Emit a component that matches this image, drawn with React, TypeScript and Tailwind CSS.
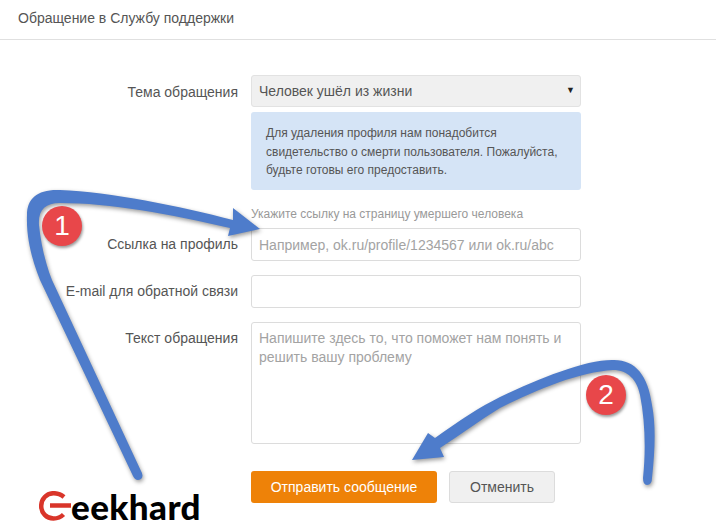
/**
 * Support request form with hand-drawn arrows laid over it
 */

const labelClass = 'w-[239px] shrink-0 pr-[1px] text-right text-[14px] text-[#555]';
const inputClass =
    'block h-[33px] w-[330px] rounded-[3px] border border-[#dcdcdc] bg-white px-[7px] text-[14px] text-[#555] placeholder:text-[#a3a3a3]';

function Arrows() {
    return (
        <svg
            className="pointer-events-none absolute top-0 left-0 drop-shadow-[1px_2px_2px_rgba(0,0,0,0.4)]"
            width="716"
            height="521"
            viewBox="0 0 716 521"
            fill="#4e7ccb"
        >
            {/* Arrow 1 */}
            <path d="M133 476 Q136 482 141 479 Q144 476 141 471 L52 280 C46 265 41 245 39 225 C38 210 45 203 60 203 C110 203 170 214 230 228 L228 236 L260 229 L233 208 L233 220 C180 206 110 192 60 190 C38 189 27 198 27 215 C26 240 33 262 40 280 Z" />
            {/* Arrow 2 */}
            <path d="M643 478 Q643 485 647 485 Q652 485 652 478 C655 450 656 425 652 405 C648 375 635 359 612 360 C585 360 540 378 500 397 C480 407 460 420 435 438 L428 433 L412 460 L444 457 L440 448 C460 435 480 420 500 408 C540 388 580 372 613 370 C628 370 637 380 640 395 C645 420 646 450 643 478 Z" />
        </svg>
    );
}

function Badge({ value, className }: { value: string; className: string }) {
    return (
        <div
            className={`absolute flex h-10 w-10 items-center justify-center rounded-full bg-[#e8474a] text-[28px] leading-none text-white shadow-[1px_2px_3px_rgba(0,0,0,0.4)] ${className}`}
        >
            {value}
        </div>
    );
}

function Logo() {
    return (
        <div className="absolute top-[491px] left-[39px] flex h-[30px] items-center">
            <svg width="32" height="30" viewBox="0 0 32 30" fill="none" stroke="#d9352a" strokeWidth="4.5" className="shrink-0">
                <path d="M25 6 C22 3.5 18.5 2.2 14.5 2.2 C7.5 2.2 2.2 8 2.2 15 C2.2 22 7.5 27.5 14.5 27.5 C18.5 27.5 22 26 24.5 23.5" />
                <path d="M11 14.5 H32" />
            </svg>
            <span className="mt-[-1px] font-['Lato',sans-serif] text-[35px] leading-[30px] font-black tracking-[0.4px] text-black">
                eekhard
            </span>
        </div>
    );
}

export default function App() {
    return (
        <div className="relative h-[521px] w-[716px] overflow-hidden bg-white font-['Liberation_Sans',Arial,sans-serif]">
            {/* Header */}
            <header className="flex h-[40px] items-start border-b border-[#e0e0e0] pt-[8px] pl-[18px] text-[14px] text-[#555]">
                Обращение в Службу поддержки
            </header>

            <main className="flex flex-col pt-[35px]">
                {/* Topic */}
                <div className="flex">
                    <div className={`${labelClass} pt-[7px]`}>Тема обращения</div>
                    <div className="ml-[12px] w-[330px]">
                        <div className="flex h-[32px] items-center justify-between rounded-[3px] border border-[#e2e2e2] bg-[#f0f0f0] pr-[5px] pl-[7px] text-[14px] text-[#555]">
                            <span>Человек ушёл из жизни</span>
                            <span className="text-[9px] text-[#222]">▼</span>
                        </div>
                        <div className="mt-[5px] h-[78px] rounded-[3px] bg-[#d5e4f6] px-[15px] pt-[12px] text-[12px] leading-[18.5px] text-[#555]">
                            Для удаления профиля нам понадобится
                            <br />
                            свидетельство о смерти пользователя. Пожалуйста,
                            <br />
                            будьте готовы его предоставить.
                        </div>
                    </div>
                </div>

                {/* Profile link */}
                <div className="mt-[17px] ml-[251px] text-[12px] leading-[14px] text-[#999]">
                    Укажите ссылку на страницу умершего человека
                </div>
                <div className="mt-[7px] flex items-center">
                    <div className={labelClass}>Ссылка на профиль</div>
                    <input className={`${inputClass} ml-[12px]`} placeholder="Например, ok.ru/profile/1234567 или ok.ru/abc" />
                </div>

                {/* E-mail */}
                <div className="mt-[14px] flex items-center">
                    <div className={labelClass}>E-mail для обратной связи</div>
                    <input className={`${inputClass} ml-[12px]`} />
                </div>

                {/* Message */}
                <div className="mt-[14px] flex">
                    <div className={`${labelClass} pt-[6px]`}>Текст обращения</div>
                    <textarea
                        className="ml-[12px] block h-[122px] w-[330px] resize-none rounded-[3px] border border-[#dcdcdc] bg-white px-[7px] py-[6px] text-[14px] leading-[19px] text-[#555] placeholder:text-[#a3a3a3]"
                        placeholder="Напишите здесь то, что поможет нам понять и решить вашу проблему"
                    />
                </div>

                {/* Actions */}
                <div className="mt-[27px] ml-[251px] flex gap-[12px]">
                    <button className="h-[32px] w-[186px] rounded-[3px] bg-[#ee8208] text-[14px] text-white">
                        Отправить сообщение
                    </button>
                    <button className="h-[32px] w-[106px] rounded-[3px] border border-[#dcdcdc] bg-[#f0f0f0] text-[14px] text-[#555]">
                        Отменить
                    </button>
                </div>
            </main>

            <Arrows />
            <Badge value="1" className="top-[206px] left-[42px]" />
            <Badge value="2" className="top-[375px] left-[586px]" />
            <Logo />
        </div>
    );
}
